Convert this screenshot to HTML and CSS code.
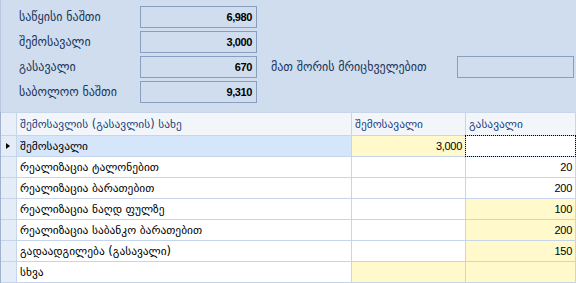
FILE: index.html
```html
<!DOCTYPE html>
<html>
<head>
<meta charset="utf-8">
<link rel="stylesheet" href="styles.css">
</head>
<body>
<div class="panel">
  <div class="fields">
    <span class="lbl">საწყისი ნაშთი</span><span class="box">6,980</span><span></span><span></span><span></span>
    <span class="lbl">შემოსავალი</span><span class="box">3,000</span><span></span><span></span><span></span>
    <span class="lbl">გასავალი</span><span class="box">670</span><span></span><span class="lbl">მათ შორის მრიცხველებით</span><span class="box"></span>
    <span class="lbl">საბოლოო ნაშთი</span><span class="box">9,310</span><span></span><span></span><span></span>
  </div>
</div>
<div class="grid">
  <div class="hd ind"></div><div class="hd">შემოსავლის (გასავლის) სახე</div><div class="hd">შემოსავალი</div><div class="hd">გასავალი</div>

  <div class="ind cur"><span class="arrow"></span></div><div class="c sel">შემოსავალი</div><div class="c n yel">3,000</div><div class="c n focus"></div>

  <div class="ind"></div><div class="c">რეალიზაცია ტალონებით</div><div class="c n"></div><div class="c n">20</div>
  <div class="ind"></div><div class="c">რეალიზაცია ბარათებით</div><div class="c n"></div><div class="c n">200</div>
  <div class="ind"></div><div class="c">რეალიზაცია ნაღდ ფულზე</div><div class="c n"></div><div class="c n yel">100</div>
  <div class="ind"></div><div class="c">რეალიზაცია საბანკო ბარათებით</div><div class="c n"></div><div class="c n yel">200</div>
  <div class="ind"></div><div class="c">გადაადგილება (გასავალი)</div><div class="c n"></div><div class="c n yel">150</div>
  <div class="ind"></div><div class="c">სხვა</div><div class="c n yel"></div><div class="c n yel"></div>
</div>
</body>
</html>
```

FILE: styles.css
```css
* { box-sizing: border-box; }
html, body {
  margin: 0;
  padding: 0;
  background: #d0ddee;
  font-family: "DejaVu Sans", sans-serif;
  font-size: 12px;
}
.panel {
  height: 112px;
  border-left: 1px solid #b8c9e0;
}
.fields {
  display: grid;
  grid-template-columns: 121px 117px 14px 186px 117px;
  grid-auto-rows: 22px;
  row-gap: 3px;
  padding: 6px 0 0 18px;
  align-items: center;
}
.lbl {
  color: #1a355a;
  white-space: nowrap;
}
.box {
  height: 22px;
  border: 1px solid #8a9fc0;
  text-align: right;
  padding-right: 4px;
  line-height: 20px;
  font-family: "Liberation Sans", sans-serif;
  font-size: 11px;
  font-weight: bold;
  letter-spacing: -0.4px;
  color: #000;
}
.grid {
  display: grid;
  grid-template-columns: 15px 334px 113px 109px;
  grid-template-rows: 22px repeat(7, 20px);
  gap: 1px;
  padding: 1px 1px 1px 0;
  border-left: 1px solid #9fb3cf;
  background: #c6d5ea;
  height: 171px;
  font-size: 11.4px;
}
.hd {
  background: #f2f6fb;
  color: #1d4380;
  padding-left: 3px;
  line-height: 22px;
  white-space: nowrap;
}
.hd.ind { background: #e9eff8; }
.ind {
  background: #e4ecf7;
  position: relative;
}
.arrow {
  position: absolute;
  left: 5px;
  top: 7px;
  width: 0;
  height: 0;
  border-top: 3.5px solid transparent;
  border-bottom: 3.5px solid transparent;
  border-left: 4px solid #000;
}
.c {
  background: #fff;
  color: #000;
  padding: 0 3px;
  line-height: 20px;
  white-space: nowrap;
}
.n {
  text-align: right;
  padding-right: 3px;
  font-family: "Liberation Sans", sans-serif;
  font-size: 11px;
  letter-spacing: -0.3px;
}
.sel { background: #d5e5fa; }
.yel { background: #fff9cc; }
.focus {
  outline: 1px dotted #000;
}
```
